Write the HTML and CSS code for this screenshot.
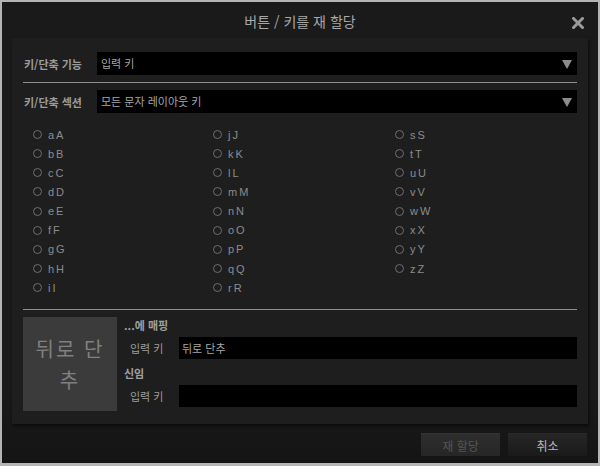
FILE: index.html
```html
<!DOCTYPE html>
<html lang="ko">

<head>
    <meta charset="UTF-8">
    <title>버튼 / 키를 재 할당</title>
    <link rel="stylesheet" href="styles.css">
</head>

<body>
    <div class="window">
        <div class="titlebar">
            <div class="title">버튼 / 키를 재 할당</div>
            <svg class="close" width="12" height="12" viewBox="0 0 12 12">
                <path d="M1.5 1.5 L10.5 10.5 M10.5 1.5 L1.5 10.5" stroke="#9a9a9a" stroke-width="3" stroke-linecap="square" />
            </svg>
        </div>

        <div class="panel">
            <div class="row">
                <div class="labl">키/단축 기능</div>
                <div class="select">입력 키<span class="arrow"></span></div>
            </div>
            <div class="sep"></div>
            <div class="row">
                <div class="labl">키/단축 섹션</div>
                <div class="select">모든 문자 레이아웃 키<span class="arrow"></span></div>
            </div>

            <div class="keys" id="keys"></div>

            <div class="sep"></div>

            <div class="mapping">
                <div class="preview">뒤로 단<br>추</div>
                <div class="fields">
                    <div class="head">...에 매핑</div>
                    <div class="field">
                        <div class="flabl">입력 키</div>
                        <div class="box">뒤로 단추</div>
                    </div>
                    <div class="head">신임</div>
                    <div class="field">
                        <div class="flabl">입력 키</div>
                        <div class="box"></div>
                    </div>
                </div>
            </div>
        </div>

        <div class="buttons">
            <button class="btn off">재 할당</button>
            <button class="btn">취소</button>
        </div>
    </div>

    <script>
        //build the letter radio list, column by column
        var keys = document.getElementById('keys');
        var letters = 'abcdefghijklmnopqrstuvwxyz';
        for (var i = 0; i < letters.length; i++) {
            var item = document.createElement('label');
            item.className = 'key';
            item.innerHTML = '<span class="radio"></span>' + letters[i] + letters[i].toUpperCase();
            keys.appendChild(item);
        }
    </script>
</body>

</html>
```

FILE: styles.css
```css
body {
    margin: 0;
    background-color: #000;
    font-family: 'Noto Sans CJK KR', 'Liberation Sans', sans-serif;
}

.window {
    width: 600px;
    height: 466px;
    box-sizing: border-box;
    border: 2px solid #b4b4b4;
    border-bottom-width: 3px;
    background: linear-gradient(#1a1a1a 0%, #1a1a1a 85%, #141414 100%);
    display: flex;
    flex-direction: column;
}

.titlebar {
    height: 36px;
    display: flex;
    align-items: center;
    justify-content: center;
    position: relative;
}

.title {
    color: #a8a8a8;
    font-size: 14px;
    padding-top: 1px;
}

.close {
    position: absolute;
    right: 14px;
    top: 15px;
}

.panel {
    margin: 0 10px 0 10px;
    padding: 14px 11px 11px 11px;
    background-color: #1e1e1e;
    box-shadow: 1px 2px 3px rgba(0, 0, 0, 0.6);
    display: flex;
    flex-direction: column;
}

.row {
    display: flex;
    align-items: center;
    height: 23px;
}

.labl {
    width: 73px;
    padding-left: 1px;
    font-size: 11px;
    font-weight: bold;
    color: #9c9c9c;
}

.select {
    flex: 1;
    height: 23px;
    background-color: #000;
    color: #a6a6a6;
    font-size: 11px;
    line-height: 23px;
    padding-left: 4px;
    position: relative;
}

.arrow {
    position: absolute;
    right: 5px;
    top: 8px;
    border-left: 5px solid transparent;
    border-right: 5px solid transparent;
    border-top: 9px solid #8c8c8c;
}

.sep {
    height: 1px;
    background-color: #8e8e8e;
    margin: 7px 0 7px 0;
}

.keys {
    display: grid;
    grid-template-rows: repeat(9, 19.15px);
    grid-auto-flow: column;
    grid-template-columns: 180px 182px 1fr;
    padding: 12px 0 5px 10px;
}

.key {
    display: flex;
    align-items: center;
    color: #8c8c8c;
    font-family: 'Liberation Sans', sans-serif;
    font-size: 11px;
    letter-spacing: 2px;
}

.radio {
    width: 7px;
    height: 7px;
    border: 1.5px solid #6e6e6e;
    border-radius: 50%;
    margin-right: 6px;
}

.mapping {
    display: flex;
}

.preview {
    width: 94px;
    height: 94px;
    background-color: #3b3b3b;
    color: #808080;
    font-size: 20px;
    line-height: 31px;
    letter-spacing: 2px;
    text-align: center;
    display: flex;
    align-items: center;
    justify-content: center;
}

.fields {
    flex: 1;
    padding-left: 7px;
}

.head {
    height: 20px;
    line-height: 16px;
    color: #a0a0a0;
    font-size: 11px;
    font-weight: bold;
}

.field {
    display: flex;
    align-items: center;
    height: 22px;
    margin-bottom: 6px;
}

.flabl {
    width: 55px;
    padding-left: 6px;
    box-sizing: border-box;
    color: #9c9c9c;
    font-size: 11px;
}

.box {
    flex: 1;
    height: 22px;
    background-color: #000;
    color: #a8a8a8;
    font-size: 11px;
    line-height: 22px;
    padding-left: 3px;
}

.buttons {
    display: flex;
    justify-content: flex-end;
    gap: 8px;
    padding: 9px 11px 0 0;
}

.btn {
    width: 79px;
    height: 23px;
    border: none;
    border-top: 1px solid #2a2a2a;
    font-family: 'Noto Sans CJK KR', sans-serif;
    font-size: 12px;
    color: #b8b8b8;
    background: linear-gradient(#262626, #1a1a1a);
    cursor: pointer;
}

.btn.off {
    color: #555;
    background: linear-gradient(#2e2e2e, #262626);
    border-top: 1px solid #333;
    cursor: default;
}
```
